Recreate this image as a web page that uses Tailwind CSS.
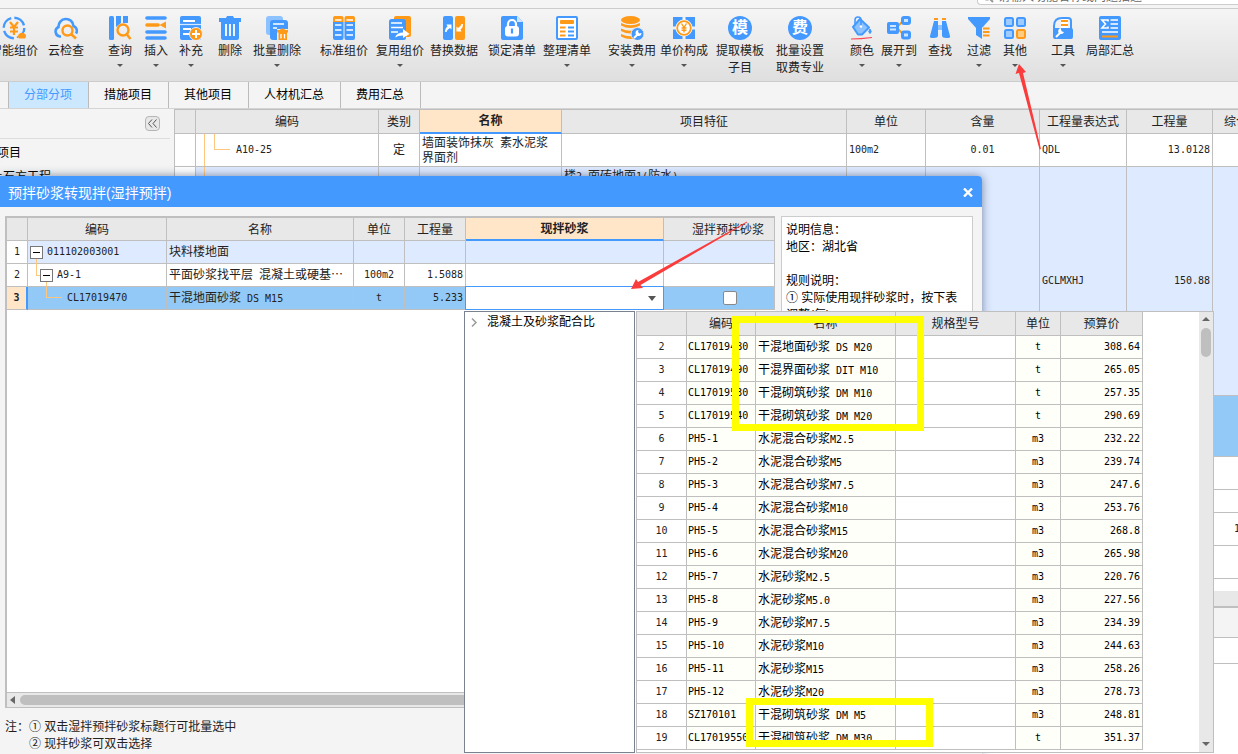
<!DOCTYPE html>
<html lang="zh-CN">
<head>
<meta charset="utf-8">
<title>预拌砂浆转现拌</title>
<script src="https://cdn.jsdelivr.net/npm/@tailwindcss/browser@4"></script>
</head>
<body class="relative flex h-screen flex-col overflow-hidden bg-[#f4f4f4] font-['Liberation_Sans','Noto_Sans_CJK_SC',sans-serif] text-xs text-[#222]">

<!-- search strip -->
<div class="flex h-2 shrink-0 items-end justify-end overflow-hidden pb-[3px]">
  <label class="flex h-4 w-[261px] shrink-0 items-center gap-1 rounded-bl border border-r-0 border-[#ccc] bg-white pl-1">
    <svg class="size-3 shrink-0" viewBox="0 0 12 12" fill="none" stroke="#999" stroke-width="2"><circle cx="5" cy="5" r="3.5"/><path d="M8 8l3 3"/></svg>
    <input type="text" aria-label="搜索" placeholder="请输入功能名称或问题描述" class="h-3.5 w-full bg-transparent text-xs leading-none outline-none placeholder:text-[#666]">
  </label>
</div>

<!-- toolbar -->
<div class="flex h-[74px] shrink-0 items-start overflow-hidden border-y border-[#ccc] bg-linear-to-b from-[#f5f5f5] to-[#dfdfdf] pt-[7px] leading-[17px] whitespace-nowrap">
  <button class="-ml-2.5 flex w-12 shrink-0 flex-col items-center"><svg class="mb-[3px] size-6" viewBox="0 0 24 24" fill="none"><circle cx="12" cy="12" r="10.3" stroke="#49f" stroke-width="2.4" stroke-dasharray="13 3.2"/><path d="M13 24h11v-9z" fill="#ececec"/><path d="M8 6l4 5 4-5M12 11v8M8 11.500h8M8 15.500h8" stroke="#ff9a18" stroke-width="2.2"/><path d="M17 22.500a3 3 0 0 1 0-4.500a4 4 0 0 1 6 0a3 3 0 0 1 0 4.500z" fill="#ff9a18"/></svg>智能组价</button>
  <button class="ml-2.5 flex w-9 shrink-0 flex-col items-center"><svg class="mb-[3px] size-6" viewBox="0 0 24 24" fill="none"><path d="M7 20.500H6A5 5 0 0 1 4.500 11 7.500 7.500 0 0 1 19.500 10 5 5 0 0 1 22 17.500" stroke="#49f" stroke-width="2.600"/><circle cx="13.500" cy="14.500" r="5" stroke="#ff9a18" stroke-width="2.400"/><path d="M17 18l5 4.500" stroke="#ff9a18" stroke-width="2.600"/></svg>云检查</button>
  <button class="ml-6 flex w-6 shrink-0 flex-col items-center"><svg class="mb-[3px] size-6" viewBox="0 0 24 24" fill="none"><rect x="1" width="5" height="24" rx="1.500" fill="#49f"/><path d="M8 0h5v7l-5 4zM15 0h5v7h-5z" fill="#49f"/><circle cx="15" cy="14" r="5.500" stroke="#ff9a18" stroke-width="2.400"/><path d="M18.500 18l4 5" stroke="#ff9a18" stroke-width="2.600"/></svg>查询<svg class="mt-1 h-[3px] w-1.5" viewBox="0 0 6 3"><path d="M0 0h6L3 3z" fill="#555"/></svg></button>
  <button class="ml-3 flex w-6 shrink-0 flex-col items-center"><svg class="mb-[3px] size-6" viewBox="0 0 24 24"><path d="M3 2h18M3 16h18M3 22h18" stroke="#49f" stroke-width="3.600" stroke-linecap="round"/><path d="M3 9h11" stroke="#ff9a18" stroke-width="3.600" stroke-linecap="round"/><path d="M22 5.500v7l-6.500-3.500z" fill="#ff9a18"/></svg>插入<svg class="mt-1 h-[3px] w-1.5" viewBox="0 0 6 3"><path d="M0 0h6L3 3z" fill="#555"/></svg></button>
  <button class="ml-[11px] flex w-6 shrink-0 flex-col items-center"><svg class="mb-[3px] size-6" viewBox="0 0 24 24"><rect x="1" width="21" height="24" rx="2" fill="#49f"/><path d="M4 5h12M4 13h8M4 18h7" stroke="#fff" stroke-width="1.800"/><path d="M1 8.500h21" stroke="#d6e9ff" stroke-width="1.200"/><circle cx="17" cy="18" r="6.500" fill="#ff9a18" stroke="#eee"/><path d="M17 14v8M13 18h8" stroke="#fff" stroke-width="2"/></svg>补充<svg class="mt-1 h-[3px] w-1.5" viewBox="0 0 6 3"><path d="M0 0h6L3 3z" fill="#555"/></svg></button>
  <button class="ml-[15px] flex w-6 shrink-0 flex-col items-center"><svg class="mb-[3px] size-6" viewBox="0 0 24 24"><path d="M1 2h7l1-2h6l1 2h7v4H1z" fill="#49f"/><path d="M3 6h18v16q0 2-2 2H5q-2 0-2-2z" fill="#49f"/><path d="M8 8v12M12 8v12M16 8v12" stroke="#fff" stroke-width="1.800"/></svg>删除</button>
  <button class="ml-[11px] flex w-12 shrink-0 flex-col items-center"><svg class="mb-[3px] size-6" viewBox="0 0 24 24"><rect x="1" width="17" height="19" rx="3" fill="#8cc2ff"/><rect x="5" y="4" width="18" height="20" rx="3" fill="#49f"/><path d="M8 8h11M8 12h4" stroke="#fff" stroke-width="1.600"/><path d="M12 13h12v11H12z" fill="#eee"/><path d="M12 14h3l1-1.500h3l1 1.500h3v2.500H12zM13.500 16.500h8.500V24h-8.500z" fill="#ff9a18"/><path d="M16 18v4.500M19.500 18v4.500" stroke="#fff" stroke-width="1.300"/></svg>批量删除<svg class="mt-1 h-[3px] w-1.5" viewBox="0 0 6 3"><path d="M0 0h6L3 3z" fill="#555"/></svg></button>
  <button class="ml-[19px] flex w-12 shrink-0 flex-col items-center"><svg class="mb-[3px] size-6" viewBox="0 0 24 24"><path d="M1 6V2q0-2 2-2h6.500q2 0 2 2v4zM12.500 6V2q0-2 2-2H21q2 0 2 2v4z" fill="#ff9a18"/><path d="M1 6h10.500v16q0 2-2 2H3q-2 0-2-2zM12.500 6H23v16q0 2-2 2h-6.500q-2 0-2-2z" fill="#49f"/><path d="M3 4h6.500M3 9h6.500M3 14h6.500M3 19h6.500M14.500 4H21M14.500 9H21M14.500 14H21M14.500 19H21" stroke="#fff" stroke-width="1.500"/></svg>标准组价</button>
  <button class="ml-2 flex w-12 shrink-0 flex-col items-center"><svg class="mb-[3px] size-6" viewBox="0 0 24 24"><rect x="6" width="17" height="21" rx="2" fill="#ff9a18"/><rect x="1" y="3" width="17" height="21" rx="2.500" fill="#49f"/><path d="M3 7h11M3 11.500h12M3 16h7" stroke="#fff" stroke-width="1.600"/><path d="M7 21.500q2-5 8-5V13l6.500 5-6.500 4v-2.500q-5 0-8 2z" fill="#fff"/></svg>复用组价<svg class="mt-1 h-[3px] w-1.5" viewBox="0 0 6 3"><path d="M0 0h6L3 3z" fill="#555"/></svg></button>
  <button class="ml-1.5 flex w-12 shrink-0 flex-col items-center"><svg class="mb-[3px] size-6" viewBox="0 0 24 24"><rect x="1" width="10" height="24" rx="2" fill="#49f"/><rect x="13" width="10" height="24" rx="2" fill="#ff9a18"/><path d="M3 16q0-4 2.500-5.500L4.500 8.500H9.500v5L8 12q-3 1.500-3.500 4zM21 8q0 4-2.500 5.500l1 2h-5v-5L16 12q3-1.500 3.500-4z" fill="#fff"/></svg>替换数据</button>
  <button class="ml-2.5 flex w-12 shrink-0 flex-col items-center"><svg class="mb-[3px] size-6" viewBox="0 0 24 24"><path d="M3 0h14l6 6v16q0 2-2 2H3q-2 0-2-2V2q0-2 2-2z" fill="#49f"/><path d="M17 0l6 6h-6z" fill="#cfe5ff"/><rect x="5" y="10" width="14" height="10.500" rx="3" fill="#fff"/><path d="M8 11V8a4 4 0 0 1 8 0v3" fill="none" stroke="#fff" stroke-width="2.200"/><path d="M12 12.500v5" stroke="#49f" stroke-width="2.200"/></svg>锁定清单</button>
  <button class="ml-[7px] flex w-12 shrink-0 flex-col items-center"><svg class="mb-[3px] size-6" viewBox="0 0 24 24"><rect x="2" y="1" width="20" height="22" rx="1" fill="#fff" stroke="#49f" stroke-width="2"/><rect x="5" y="4" width="14" height="4" rx="1" fill="#ff9a18"/><path d="M5 11.500h5.500M5 15.500h5.500M5 19.500h5.500" stroke="#ff9a18" stroke-width="2"/><path d="M13 11.500h6M13 15.500h6M13 19.500h6" stroke="#49f" stroke-width="2"/></svg>整理清单<svg class="mt-1 h-[3px] w-1.5" viewBox="0 0 6 3"><path d="M0 0h6L3 3z" fill="#555"/></svg></button>
  <button class="ml-[17px] flex w-12 shrink-0 flex-col items-center"><svg class="mb-[3px] size-6" viewBox="0 0 24 24"><g fill="#ff9a18"><ellipse cx="10.500" cy="4" rx="9.500" ry="4"/><path d="M1 7q9.500 4.500 19 0v2.500q-9.500 5-19 0zM1 12.500q9.500 4.500 19 0V15q-9.500 5-19 0zM1 18q9.500 4.500 19 0v2.500q-9.500 5-19 0z"/></g><circle cx="17.500" cy="18" r="6.500" fill="#49f" stroke="#e8e8e8"/><path d="M14 22l4-4" stroke="#fff" stroke-width="2"/><path d="M18.500 14a3 3 0 1 0 3 3l-2 .500-1.500-1.500z" fill="#fff"/></svg>安装费用<svg class="mt-1 h-[3px] w-1.5" viewBox="0 0 6 3"><path d="M0 0h6L3 3z" fill="#555"/></svg></button>
  <button class="ml-1 flex w-12 shrink-0 flex-col items-center"><svg class="mb-[3px] size-6" viewBox="0 0 24 24" fill="none"><path d="M1 1h9.500v9.500H1zM13.500 1H23v9.500h-9.500zM1 13.500h9.500V23H1zM13.500 13.500H23V23h-9.500z" fill="#49f"/><circle cx="12" cy="12" r="8.500" fill="#fff"/><circle cx="12" cy="12" r="6.800" stroke="#ff9a18" stroke-width="1.800"/><path d="M9.500 7.500l2.500 4 2.500-4M12 11v5.500M9.500 12h5M9.500 14.300h5" stroke="#ff9a18" stroke-width="1.400"/></svg>单价构成<svg class="mt-1 h-[3px] w-1.5" viewBox="0 0 6 3"><path d="M0 0h6L3 3z" fill="#555"/></svg></button>
  <button class="ml-2 flex w-12 shrink-0 flex-col items-center"><span class="mb-[3px] flex size-6 items-center justify-center rounded-full bg-[#49f] text-base leading-none font-bold text-white">模</span><span>提取模板<br>子目</span></button>
  <button class="ml-3 flex w-12 shrink-0 flex-col items-center"><span class="mb-[3px] flex size-6 items-center justify-center rounded-full bg-[#49f] text-base leading-none font-bold text-white">费</span><span>批量设置<br>取费专业</span></button>
  <button class="ml-[26px] flex w-6 shrink-0 flex-col items-center"><svg class="mb-[3px] size-6" viewBox="0 0 24 24" fill="none"><path d="M3 11L10 3l9 8.500-7 7H8z" fill="#8cc2ff" stroke="#49f" stroke-width="2" stroke-linejoin="round"/><path d="M5 8V4q0-3 3-3t3 3v6" stroke="#49f" stroke-width="1.600"/><circle cx="11" cy="10.500" r="1.300" fill="#fff"/><path d="M20 13q2.500 3 0 4.500-2.500-1.500 0-4.500z" fill="#49f" stroke="#49f"/><path d="M1 23q10 0 21-1.500" stroke="#f45" stroke-width="1.200"/></svg>颜色<svg class="mt-1 h-[3px] w-1.5" viewBox="0 0 6 3"><path d="M0 0h6L3 3z" fill="#555"/></svg></button>
  <button class="ml-[7px] flex w-9 shrink-0 flex-col items-center"><svg class="mb-[3px] size-6" viewBox="0 0 24 24" fill="none"><path d="M11 10l5-5M11 13l5 5" stroke="#ff9a18" stroke-width="2"/><rect y="6" width="12" height="12" rx="2" fill="#49f"/><path d="M3 10h6M3 13.500h6" stroke="#cfe5ff" stroke-width="1.800"/><rect x="15.500" y="1.500" width="7" height="6" rx="1.500" fill="#cfe5ff" stroke="#49f" stroke-width="3"/><rect x="15.500" y="16" width="7" height="6" rx="1.500" fill="#cfe5ff" stroke="#49f" stroke-width="3"/></svg>展开到<svg class="mt-1 h-[3px] w-1.5" viewBox="0 0 6 3"><path d="M0 0h6L3 3z" fill="#555"/></svg></button>
  <button class="ml-[11px] flex w-6 shrink-0 flex-col items-center"><svg class="mb-[3px] size-6" viewBox="0 0 24 24"><path d="M6 2h4v2H6zM14 2h4v2h-4z" fill="#ff9a18"/><path d="M6 5h4v14.500q0 2.500-4.500 2.500T2 20zM14 5h4l4 15q1 2-3.500 2T14 19.500z" fill="#49f"/><rect x="10" y="9" width="4" height="5" fill="#8cc2ff"/></svg>查找</button>
  <button class="ml-[15px] flex w-6 shrink-0 flex-col items-center"><svg class="mb-[3px] size-6" viewBox="0 0 24 24"><path d="M1 1h22v2l-8 9v11l-6-4v-7L1 3z" fill="#49f"/><path d="M15.500 11H23v12h-7.500z" fill="#eee"/><path d="M16 12.500h6.500M16 16h6.500M16 19.500h6.500" stroke="#ff9a18" stroke-width="2"/></svg>过滤<svg class="mt-1 h-[3px] w-1.5" viewBox="0 0 6 3"><path d="M0 0h6L3 3z" fill="#555"/></svg></button>
  <button class="ml-3 flex w-6 shrink-0 flex-col items-center"><svg class="mb-[3px] size-6" viewBox="0 0 24 24" fill="#9fccff" stroke="#49f" stroke-width="2"><rect x="2" y="2" width="8" height="8" rx="1.500"/><rect x="14" y="2" width="8" height="8" rx="1.500"/><rect x="2" y="14" width="8" height="8" rx="1.500"/><rect x="14" y="14" width="8" height="8" rx="1.500" fill="#ffcc80" stroke="#ff9a18"/></svg>其他<svg class="mt-1 h-[3px] w-1.5" viewBox="0 0 6 3"><path d="M0 0h6L3 3z" fill="#555"/></svg></button>
  <button class="ml-6 flex w-6 shrink-0 flex-col items-center"><svg class="mb-[3px] size-6" viewBox="0 0 24 24" fill="none"><path d="M3 20V10q0-8 8-8h6q3 0 3 3v9" stroke="#49f" stroke-width="2"/><path d="M10 3h7v9h-7z" fill="#fff"/><path d="M10 5h7M10 9h7" stroke="#ff9a18" stroke-width="2"/><path d="M2 12h18q2 0 2 2v7q0 2-2 2H4q-2 0-2-2z" fill="#49f"/><path d="M5 21l4-4" stroke="#fff" stroke-width="2"/><path d="M10 12a3 3 0 1 0 3 4l-2-.500-1-1.500z" fill="#fff"/></svg>工具<svg class="mt-1 h-[3px] w-1.5" viewBox="0 0 6 3"><path d="M0 0h6L3 3z" fill="#555"/></svg></button>
  <button class="ml-[11px] flex w-12 shrink-0 flex-col items-center"><svg class="mb-[3px] size-6" viewBox="0 0 24 24" fill="none"><rect x="1" width="22" height="24" rx="2" fill="#49f"/><path d="M10 5.500V4H4l3.500 4L4 12h6v-1.500M12.500 4H20M12.500 8H20M12.500 12H20M4 16h16" stroke="#fff" stroke-width="1.600"/><path d="M4 20.500h16" stroke="#ff9a18" stroke-width="2"/></svg>局部汇总</button>
</div>

<!-- tabs -->
<nav class="flex h-[27px] shrink-0 border-b border-[#d4d4d4] pl-2 text-black">
  <button class="border-x border-[#bbb] bg-[#cce8ff] pr-4 pl-[15px] text-[#49f]">分部分项</button>
  <button class="border-r border-[#bbb] pr-4 pl-[15px]">措施项目</button>
  <button class="border-r border-[#bbb] pr-4 pl-[15px]">其他项目</button>
  <button class="border-r border-[#bbb] pr-4 pl-[15px]">人材机汇总</button>
  <button class="border-r border-[#bbb] pr-4 pl-[15px]">费用汇总</button>
</nav>

<!-- project tree and bill grid -->
<div class="flex min-h-0 flex-1">
  <aside class="w-[174px] shrink-0 overflow-hidden pr-1 text-black">
    <div class="flex h-[30px] items-center justify-end border-b border-[#ddd] pr-2.5">
      <button aria-label="收起" class="flex size-[15px] items-center justify-center rounded-sm border border-[#b5b5b5] bg-[#e8e8e8]"><svg class="size-[9px]" viewBox="0 0 9 9" fill="none" stroke="#555"><path d="M4 0.500L0.500 4.500 4 8.500M8.500 0.500L5 4.500 8.500 8.500"/></svg></button>
    </div>
    <div class="-ml-[3px] pt-[5px] leading-[18px]">项目</div>
    <div class="-ml-[9px] pt-1.5 leading-[18px]">土石方工程</div>
  </aside>

  <main class="flex min-w-0 flex-1 flex-col overflow-hidden border-t border-l border-[#bfbfbf] bg-white">
    <table class="w-full table-fixed border-separate border-spacing-0 leading-[14px] [&_td]:border-r [&_td]:border-b [&_td]:border-[#bfbfbf] [&_td]:p-0 [&_td:last-child]:border-r-0 [&_th]:border-r [&_th]:border-b [&_th]:border-[#bfbfbf] [&_th]:p-0 [&_th:last-child]:border-r-0">
      <colgroup><col class="w-[21px]"><col class="w-[183px]"><col class="w-[41px]"><col class="w-[142px]"><col class="w-[285px]"><col class="w-[79px]"><col class="w-[114px]"><col class="w-[87px]"><col class="w-[86px]"><col></colgroup>
      <thead>
        <tr class="h-6 bg-[#e8e8e8] [&_th]:font-normal"><th></th><th>编码</th><th>类别</th><th class="border-b-2! border-b-[#49f]! bg-[#ffe6c8]"><b>名称</b></th><th>项目特征</th><th>单位</th><th>含量</th><th>工程量表达式</th><th>工程量</th><th class="overflow-hidden pl-[11px]! text-left whitespace-nowrap">综合</th></tr>
      </thead>
      <tbody>
        <tr class="h-[33px]"><td></td>
          <td class="relative pl-10! font-['DejaVu_Sans_Mono',monospace] text-[10px]"><span class="absolute inset-y-0 left-2 border-l border-[#ffc77d]"></span><span class="absolute top-0 left-[18px] h-4 w-4 border-b border-l border-[#ffc77d]"></span>A10-25</td>
          <td class="text-center">定</td><td class="pr-3! pl-0.5!">墙面装饰抹灰<span class="font-['DejaVu_Sans_Mono',monospace] text-[10px]"> </span>素水泥浆界面剂</td><td></td>
          <td class="pl-0.5! font-['DejaVu_Sans_Mono',monospace] text-[10px]">100m2</td><td class="text-center font-['DejaVu_Sans_Mono',monospace] text-[10px]">0.01</td><td class="pl-0.5! font-['DejaVu_Sans_Mono',monospace] text-[10px]">QDL</td><td class="pr-0.5! text-right font-['DejaVu_Sans_Mono',monospace] text-[10px]">13.0128</td><td></td></tr>
        <tr class="h-[229px] bg-[#deeaff]"><td class="bg-white"></td><td class="relative"><span class="absolute inset-y-0 left-2 border-l border-[#ffc77d]"></span></td><td></td><td></td>
          <td class="pt-0.5! pl-0.5! align-top">楼<span class="font-['DejaVu_Sans_Mono',monospace] text-[10px]">2-</span>面砖地面<span class="font-['DejaVu_Sans_Mono',monospace] text-[10px]">1(</span>防水<span class="font-['DejaVu_Sans_Mono',monospace] text-[10px]">)</span></td><td></td><td></td>
          <td class="pl-0.5! font-['DejaVu_Sans_Mono',monospace] text-[10px]">GCLMXHJ</td><td class="pr-0.5! text-right font-['DejaVu_Sans_Mono',monospace] text-[10px]">150.88</td><td></td></tr>
        <tr class="h-[61px] bg-[#92c9f7]"><td></td><td></td><td></td><td></td><td></td><td></td><td></td><td></td><td></td><td></td></tr>
        <tr class="h-[33px]"><td></td><td></td><td></td><td></td><td></td><td></td><td></td><td></td><td></td><td></td></tr>
        <tr class="h-[23px]"><td></td><td></td><td></td><td></td><td></td><td></td><td></td><td></td><td></td><td></td></tr>
        <tr class="h-[33px]"><td></td><td></td><td></td><td></td><td></td><td></td><td></td><td></td><td></td><td class="overflow-hidden pl-[21px]! font-['DejaVu_Sans_Mono',monospace] text-[10px]">1</td></tr>
        <tr class="h-[33px]"><td></td><td></td><td></td><td></td><td></td><td></td><td></td><td></td><td></td><td></td></tr>
      </tbody>
    </table>
    <div class="mt-3 h-[15px] shrink-0 bg-[#e8e8e8]"></div>
    <div class="h-8 shrink-0 border-t-2 border-b border-[#bfbfbf] bg-[#f4f4f4]"></div>
    <div class="h-[26px] shrink-0 border-b border-[#bfbfbf]"></div>
  </main>
</div>

<!-- dialog -->
<section role="dialog" aria-label="预拌砂浆转现拌" class="absolute top-[176px] bottom-0 left-0 flex w-[982px] flex-col rounded-tr bg-[#f4f4f4] shadow-[0_0_10px_rgba(30,50,90,0.55)]">
  <header class="flex h-[31px] shrink-0 items-center justify-between rounded-tr bg-[#49f] pt-0.5 pr-[9px] pl-2 text-sm text-white">
    <h1>预拌砂浆转现拌(湿拌预拌)</h1>
    <button aria-label="关闭"><svg class="h-[9px] w-[10px]" viewBox="0 0 10 9" stroke="#fff" stroke-width="2.400"><path d="M1 .5l8 8M9 .5l-8 8"/></svg></button>
  </header>
  <div class="flex min-h-0 flex-1 gap-1.5 pt-[9px] pr-[9px] pl-[5px]">
    <div class="flex min-w-0 flex-1 flex-col border-t-2 border-b border-l-2 border-[#bfbfbf] bg-white">
      <table class="w-full table-fixed border-separate border-spacing-0 leading-[14px] whitespace-nowrap [&_td]:border-r [&_td]:border-b [&_td]:border-[#bfbfbf] [&_td]:p-0 [&_th]:border-r [&_th]:border-b [&_th]:border-[#bfbfbf] [&_th]:p-0">
        <colgroup><col class="w-[21px]"><col class="w-[139px]"><col class="w-[187px]"><col class="w-[51px]"><col class="w-[61px]"><col class="w-[198px]"><col></colgroup>
        <thead><tr class="h-[23px] bg-[#e8e8e8] [&_th]:pt-px [&_th]:font-normal"><th></th><th>编码</th><th>名称</th><th>单位</th><th>工程量</th><th class="border-b-2! border-b-[#49f]! bg-[#ffe6c8]"><b>现拌砂浆</b></th><th class="pl-[18px]!">湿拌预拌砂浆</th></tr></thead>
        <tbody>
          <tr class="h-[23px] bg-[#deeaff]"><td class="bg-white text-center font-['DejaVu_Sans_Mono',monospace] text-[10px]">1</td>
            <td><div class="flex items-center pl-0.5 font-['DejaVu_Sans_Mono',monospace] text-[10px]"><button aria-label="折叠" class="mr-1 flex size-[13px] items-center justify-center border border-[#777] bg-white"><span class="h-px w-[7px] bg-black"></span></button>011102003001</div></td>
            <td class="pl-0.5!">块料楼地面</td><td></td><td></td><td></td><td></td></tr>
          <tr class="h-[23px]"><td class="text-center font-['DejaVu_Sans_Mono',monospace] text-[10px]">2</td>
            <td class="relative"><span class="absolute -top-[5px] left-2 h-[17px] w-1 border-b border-l border-[#ffc77d]"></span><div class="flex items-center pl-3 font-['DejaVu_Sans_Mono',monospace] text-[10px]"><button aria-label="折叠" class="mr-1 flex size-[13px] items-center justify-center border border-[#777] bg-white"><span class="h-px w-[7px] bg-black"></span></button>A9-1</div></td>
            <td class="pl-0.5!">平面砂浆找平层<span class="font-['DejaVu_Sans_Mono',monospace] text-[10px]"> </span>混凝土或硬基<span class="font-['Noto_Sans_CJK_SC']">⋯</span></td><td class="text-center font-['DejaVu_Sans_Mono',monospace] text-[10px]">100m2</td><td class="pr-0.5! text-right font-['DejaVu_Sans_Mono',monospace] text-[10px]">1.5088</td><td></td><td></td></tr>
          <tr class="h-[23px] bg-[#92c9f7]"><td class="border-r-2! border-r-[#49f]! bg-[#ffe6c8] text-center font-['DejaVu_Sans_Mono',monospace] text-[10px] font-bold">3</td>
            <td class="relative pl-[39px]! font-['DejaVu_Sans_Mono',monospace] text-[10px]"><span class="absolute -top-[5px] left-[18px] h-4 w-4 border-b border-l border-[#ffc77d]"></span>CL17019470</td>
            <td class="pl-0.5!">干混地面砂浆<span class="font-['DejaVu_Sans_Mono',monospace] text-[10px]"> DS M15</span></td><td class="text-center font-['DejaVu_Sans_Mono',monospace] text-[10px]">t</td><td class="pr-0.5! text-right font-['DejaVu_Sans_Mono',monospace] text-[10px]">5.233</td>
            <td class="relative"><div class="absolute -inset-px flex"><select aria-label="现拌砂浆" class="w-full appearance-none border border-[#49f] bg-white"><option></option></select><svg class="pointer-events-none absolute top-2.5 right-2 h-[5px] w-2" viewBox="0 0 8 5"><path d="M0 0h8L4 5z" fill="#555"/></svg></div></td>
            <td><div class="flex justify-center pl-[22px]"><input type="checkbox" aria-label="湿拌预拌砂浆" class="size-3.5 appearance-none rounded-xs border border-[#888] bg-white"></div></td></tr>
        </tbody>
      </table>
      <div class="mt-auto flex h-[15px] shrink-0 items-center gap-[5px] border-t border-[#bfbfbf] bg-[#e8e8e8] pl-[3px]"><svg class="h-2 w-[5px]" viewBox="0 0 5 8"><path d="M5 0v8L0 4z" fill="#666"/></svg><div class="h-2.5 flex-1 rounded-full bg-[#bfbfbf]"></div></div>
    </div>
    <div class="w-[192px] shrink-0 overflow-hidden border border-[#ccc] bg-white px-1 pt-[5px] leading-[17px] text-black">说明信息：<br>地区：湖北省<br><br>规则说明：<br>① 实际使用现拌砂浆时，按下表<br>调整(每)：</div>
  </div>
  <footer class="flex h-[46px] shrink-0 pt-[11px] pl-[5px] leading-[17px]"><span class="w-6 whitespace-nowrap">注：</span><p>① 双击湿拌预拌砂浆标题行可批量选中<br>② 现拌砂浆可双击选择</p></footer>
</section>

<!-- drop-down panel -->
<div class="absolute top-[311px] bottom-px left-[464px] flex w-[750px] gap-px bg-white text-black">
  <div class="w-[171px] shrink-0 border border-[#7a8290] bg-white">
    <button class="flex items-center gap-2.5 pt-0.5 pl-1.5 leading-4"><svg class="h-[9px] w-1.5" viewBox="0 0 6 9" fill="none" stroke="#999" stroke-width="1.500"><path d="M1 .5l4 4-4 4"/></svg>混凝土及砂浆配合比</button>
  </div>
  <div class="flex min-w-0 flex-1 justify-between overflow-hidden border border-[#bfbfbf]">
    <table class="w-[506px] shrink-0 table-fixed border-separate self-start border-spacing-0 leading-[14px] whitespace-nowrap [&_td]:border-r [&_td]:border-b [&_td]:border-[#bfbfbf] [&_td]:p-0 [&_th]:border-r [&_th]:border-b [&_th]:border-[#bfbfbf] [&_th]:p-0 [&_th]:font-normal">
      <colgroup><col class="w-[50px]"><col class="w-[69px]"><col class="w-[140px]"><col class="w-[120px]"><col class="w-[45px]"><col class="w-[82px]"></colgroup>
      <thead><tr class="h-6 bg-[#e8e8e8] text-[#222]"><th></th><th>编码</th><th>名称</th><th>规格型号</th><th>单位</th><th>预算价</th></tr></thead>
      <tbody id="rows"></tbody>
    </table>
    <div class="flex w-3.5 shrink-0 flex-col items-center justify-between bg-[#e8e8e8] pt-[5px] pb-1.5"><div class="flex flex-col items-center gap-[7px]"><svg class="h-1 w-2" viewBox="0 0 8 4"><path d="M0 4h8L4 0z" fill="#666"/></svg><div class="h-[29px] w-2.5 rounded-full bg-[#bfbfbf]"></div></div><svg class="h-1 w-2" viewBox="0 0 8 4"><path d="M0 0h8L4 4z" fill="#666"/></svg></div>
  </div>
</div>

<!-- highlight marks -->
<div class="pointer-events-none absolute top-[316px] left-[732px] h-[115px] w-[192px] border-7 border-[#ff0]"></div>
<div class="pointer-events-none absolute top-[698px] left-[746px] h-[49px] w-[187px] border-7 border-[#ff0]"></div>
<svg class="pointer-events-none absolute top-0 left-0 h-[754px] w-[1238px]" viewBox="0 0 1238 754" fill="#fa3c3c"><path d="M1019 64l7 8-3 1 18 76-1.500.500L1019 73l-3.500 1z"/><path d="M631 289l5-10 2 3L747 221.500v1L640.500 285l2.500 3z"/></svg>

<script>
const rows = [
  [2,'CL17019480','干混地面砂浆',' DS M20','t','308.64'],
  [3,'CL17019490','干混界面砂浆',' DIT M10','t','265.05'],
  [4,'CL17019530','干混砌筑砂浆',' DM M10','t','257.35'],
  [5,'CL17019540','干混砌筑砂浆',' DM M20','t','290.69'],
  [6,'PH5-1','水泥混合砂浆','M2.5','m3','232.22'],
  [7,'PH5-2','水泥混合砂浆','M5','m3','239.74'],
  [8,'PH5-3','水泥混合砂浆','M7.5','m3','247.6'],
  [9,'PH5-4','水泥混合砂浆','M10','m3','253.76'],
  [10,'PH5-5','水泥混合砂浆','M15','m3','268.8'],
  [11,'PH5-6','水泥混合砂浆','M20','m3','265.98'],
  [12,'PH5-7','水泥砂浆','M2.5','m3','220.76'],
  [13,'PH5-8','水泥砂浆','M5.0','m3','227.56'],
  [14,'PH5-9','水泥砂浆','M7.5','m3','234.39'],
  [15,'PH5-10','水泥砂浆','M10','m3','244.63'],
  [16,'PH5-11','水泥砂浆','M15','m3','258.26'],
  [17,'PH5-12','水泥砂浆','M20','m3','278.73'],
  [18,'SZ170101','干混砌筑砂浆',' DM M5','m3','248.81'],
  [19,'CL17019550','干混砌筑砂浆',' DM M30','t','351.37']
];
document.getElementById('rows').innerHTML = rows.map(([n, code, name, grade, unit, price]) => `
  <tr class="h-[23px] bg-[#fffffa] font-['DejaVu_Sans_Mono',monospace] text-[10px]">
    <td class="bg-white text-center text-[#222]">${n}</td>
    <td class="overflow-hidden pl-px!">${code}</td>
    <td class="pl-0.5!"><span class="font-['Noto_Sans_CJK_SC',sans-serif] text-xs leading-[14px]">${name}</span>${grade}</td>
    <td class="bg-white"></td>
    <td class="text-center">${unit}</td>
    <td class="pr-0.5! text-right">${price}</td>
  </tr>`).join('');
</script>
</body>
</html>
